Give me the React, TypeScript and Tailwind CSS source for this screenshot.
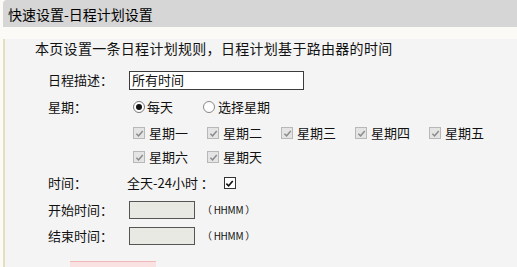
import type { ReactNode } from 'react';

const font = { fontFamily: '"Noto Sans CJK SC", "Liberation Sans", sans-serif' };

function GreyCheck() {
  return (
    <span className="flex h-[12px] w-[12px] items-center justify-center border border-[#b8b8b8] bg-[#e4e4e4]">
      <svg viewBox="0 0 10 10" className="h-[9px] w-[9px]">
        <path d="M1.5 5.2 L4 7.6 L8.6 2.2" fill="none" stroke="#8c8c8c" strokeWidth="1.6" />
      </svg>
    </span>
  );
}

function DayItem({ label }: { label: string }) {
  return (
    <div className="flex w-[74px] items-center gap-[4px]">
      <GreyCheck />
      <span>{label}</span>
    </div>
  );
}

function Row({ label, h, children }: { label: string; h: string; children?: ReactNode }) {
  return (
    <div className={`flex items-center ${h}`}>
      <div className="w-[81px] shrink-0">{label}</div>
      <div className="flex items-center">{children}</div>
    </div>
  );
}

export default function App() {
  return (
    <div className="h-[267px] w-[517px] overflow-hidden bg-[#fbfaf7] pl-[3px] text-[13px] leading-[18px] text-[#111]" style={font}>
      <div className="flex h-[27px] items-center rounded-tl-[4px] bg-[#d6d6d6] pl-[5px] text-[14px] text-black">
        快速设置-日程计划设置
      </div>
      <div className="h-[240px] border-l-[2px] border-[#e6dcc0] bg-[#f4f4f4]">
        <div className="mt-[12px] h-[18px] pl-[30px] text-[14px] tracking-[0.3px]">本页设置一条日程计划规则，日程计划基于路由器的时间</div>
        <div className="mt-[10px] pl-[43px]">
          <Row label="日程描述：" h="h-[26px]">
            <div className="flex h-[19px] w-[175px] items-center border border-[#3c3c3c] bg-white pl-[2px]">所有时间</div>
          </Row>
          <Row label="星期：" h="h-[28px]">
            <label className="ml-[4px] flex items-center gap-[2px]">
              <span className="flex h-[12px] w-[12px] items-center justify-center rounded-full border border-[#777] bg-white">
                <span className="h-[6px] w-[6px] rounded-full bg-[#111]" />
              </span>
              <span>每天</span>
            </label>
            <label className="ml-[30px] flex items-center gap-[3px]">
              <span className="h-[12px] w-[12px] rounded-full border border-[#888] bg-white" />
              <span>选择星期</span>
            </label>
          </Row>
          <Row label="" h="h-[24px]">
            <div className="ml-[4px] flex">
              <DayItem label="星期一" />
              <DayItem label="星期二" />
              <DayItem label="星期三" />
              <DayItem label="星期四" />
              <DayItem label="星期五" />
            </div>
          </Row>
          <Row label="" h="h-[24px]">
            <div className="ml-[4px] flex">
              <DayItem label="星期六" />
              <DayItem label="星期天" />
            </div>
          </Row>
          <Row label="时间：" h="h-[28px]">
            <span className="-ml-[2px]">全天-24小时 ：</span>
            <span className="ml-[10px] flex h-[12px] w-[12px] items-center justify-center border border-[#333] bg-white">
              <svg viewBox="0 0 10 10" className="h-[9px] w-[9px]">
                <path d="M1.5 5.2 L4 7.6 L8.6 2.2" fill="none" stroke="#111" strokeWidth="1.8" />
              </svg>
            </span>
          </Row>
          <Row label="开始时间：" h="h-[26px]">
            <div className="h-[18px] w-[66px] border border-[#555] bg-[#e9e9e4]" />
            <span className="ml-[7px] text-[10px] tracking-[-0.3px]">（ HHMM ）</span>
          </Row>
          <Row label="结束时间：" h="h-[26px]">
            <div className="h-[18px] w-[66px] border border-[#555] bg-[#e9e9e4]" />
            <span className="ml-[7px] text-[10px] tracking-[-0.3px]">（ HHMM ）</span>
          </Row>
        </div>
        <div className="ml-[65px] mt-[12px] h-[8px] w-[86px] border-t border-[#f0b8b8] bg-[#fbe2e2]" />
      </div>
    </div>
  );
}
